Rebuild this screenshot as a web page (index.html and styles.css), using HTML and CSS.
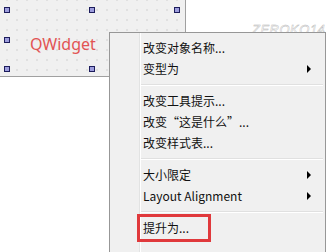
FILE: index.html
```html
<!DOCTYPE html>
<html lang="zh-CN">
<head>
    <meta charset="UTF-8">
    <title>QWidget 右键菜单</title>
    <link rel="stylesheet" href="styles.css">
</head>
<body>
    <div class="canvas">
        <div class="form">
            <span class="handle" style="left:4px;top:7px"></span>
            <span class="handle" style="left:89px;top:7px"></span>
            <span class="handle" style="left:174px;top:7px"></span>
            <span class="handle" style="left:4px;top:37px"></span>
            <span class="handle" style="left:174px;top:37px"></span>
            <span class="handle" style="left:4px;top:66px"></span>
            <span class="handle" style="left:89px;top:66px"></span>
            <span class="handle" style="left:174px;top:66px"></span>
            <span class="label">QWidget</span>
        </div>

        <div class="watermark">ZEROKO14</div>

        <div class="menu">
            <div class="item"><span>改变对象名称...</span></div>
            <div class="item"><span>变型为</span><i class="arrow"></i></div>
            <div class="sep"></div>
            <div class="item"><span>改变工具提示...</span></div>
            <div class="item"><span>改变“这是什么”...</span></div>
            <div class="item"><span>改变样式表...</span></div>
            <div class="sep"></div>
            <div class="item"><span>大小限定</span><i class="arrow"></i></div>
            <div class="item"><span>Layout Alignment</span><i class="arrow"></i></div>
            <div class="sep"></div>
            <div class="item"><span>提升为...</span></div>
            <div class="item"></div>
            <div class="mark"></div>
        </div>
    </div>
</body>
</html>
```

FILE: styles.css
```css
body {
    margin: 0;
    background-color: #fff;
    font-family: "Noto Sans CJK SC", "Noto Sans", sans-serif;
    overflow: hidden;
}

.canvas {
    position: relative;
    width: 330px;
    height: 252px;
}

/* designer form with dotted grid */
.form {
    position: relative;
    width: 186px;
    height: 77px;
    box-sizing: border-box;
    border-right: 1px solid #a0a0a0;
    border-bottom: 1px solid #a0a0a0;
    background-color: #f0f0f0;
    background-image: radial-gradient(circle, #bcbcbc 0.5px, transparent 0.8px);
    background-size: 10px 10px;
    background-position: 2px 5px;
    padding: 31px 0 0 30px;
}

.handle {
    position: absolute;
    width: 6px;
    height: 6px;
    box-sizing: border-box;
    border: 1px solid #1c1c5c;
    background-color: #9c9cdc;
}

.label {
    font-family: "Noto Sans", sans-serif;
    color: #e25454;
    font-size: 16px;
    line-height: 20px;
}

.watermark {
    position: absolute;
    left: 252px;
    top: 22px;
    font-family: "Liberation Sans", sans-serif;
    font-style: italic;
    font-size: 13px;
    letter-spacing: 0.5px;
    color: #fff;
    -webkit-text-stroke: 0.4px #b4b4b4;
}

.menu {
    position: absolute;
    left: 109px;
    top: 32px;
    width: 217px;
    height: 230px;
    box-sizing: border-box;
    border: 1px solid #979797;
    background-color: #f0f0f0;
    padding-top: 4px;
    font-size: 12px;
    color: #111;
}

.menu::before {
    content: "";
    position: absolute;
    left: 29px;
    top: 0;
    bottom: 0;
    width: 1px;
    background-color: #e2e3e3;
    border-right: 1px solid #fff;
}

.item {
    display: flex;
    justify-content: space-between;
    align-items: center;
    height: 21px;
    padding: 0 14px 0 33px;
}

.arrow {
    width: 0;
    height: 0;
    border-top: 4px solid transparent;
    border-bottom: 4px solid transparent;
    border-left: 4px solid #000;
}

.sep {
    height: 11px;
    margin-left: 30px;
    margin-right: 2px;
    background: linear-gradient(#e0e0e0, #e0e0e0) 0 5px / 100% 1px no-repeat,
                linear-gradient(#fff, #fff) 0 6px / 100% 1px no-repeat;
}

.mark {
    position: absolute;
    left: 27px;
    top: 181px;
    width: 74px;
    height: 28px;
    box-sizing: border-box;
    border: 3px solid #e0393c;
}
```
